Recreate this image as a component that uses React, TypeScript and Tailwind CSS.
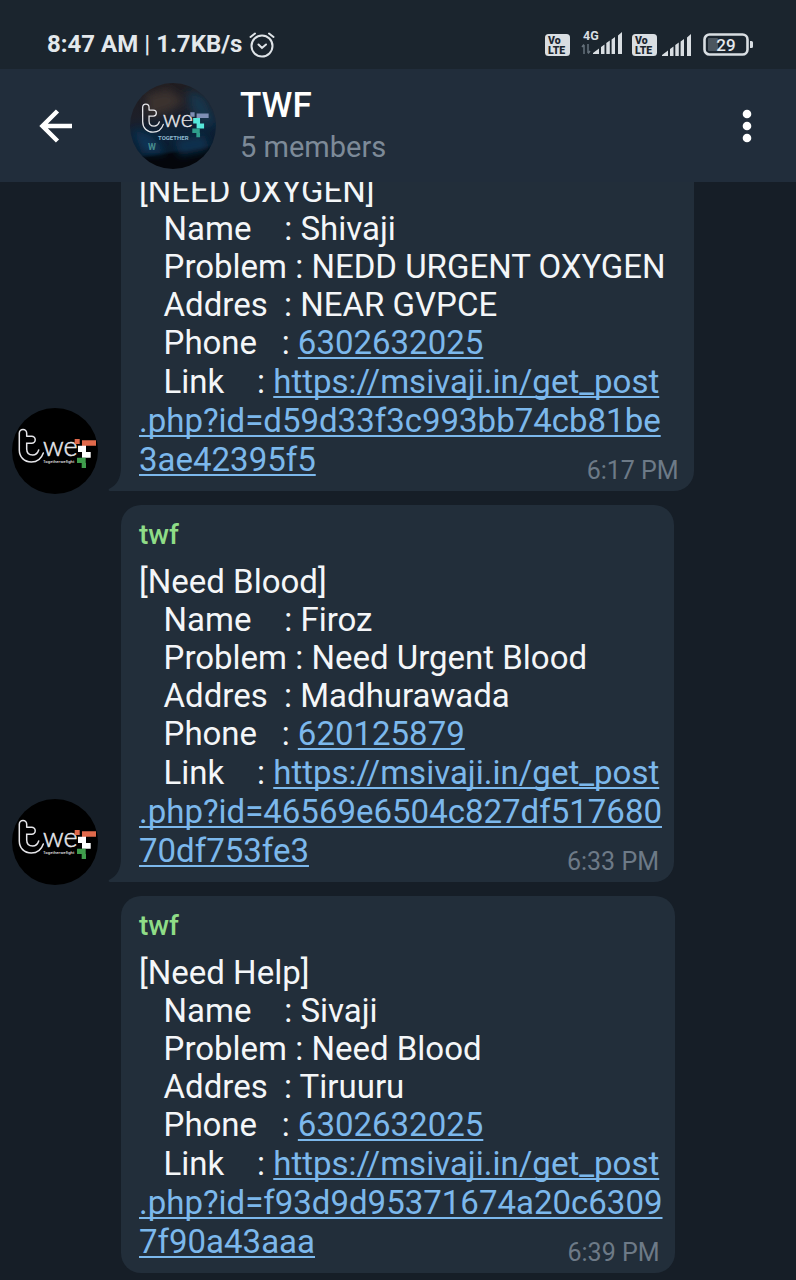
import React, { Fragment } from "react";

type Message = {
  sender?: string;
  title: string;
  name: string;
  problem: string;
  address: string;
  phone: string;
  link: string[];
  time: string;
  avatar: boolean;
  wide?: boolean;
};

const messages: Message[] = [
  {
    title: "[NEED OXYGEN]",
    name: "Shivaji",
    problem: "NEDD URGENT OXYGEN",
    address: "NEAR GVPCE",
    phone: "6302632025",
    link: ["https://msivaji.in/get_post", ".php?id=d59d33f3c993bb74cb81be", "3ae42395f5"],
    time: "6:17 PM",
    avatar: true,
    wide: true,
  },
  {
    sender: "twf",
    title: "[Need Blood]",
    name: "Firoz",
    problem: "Need Urgent Blood",
    address: "Madhurawada",
    phone: "620125879",
    link: ["https://msivaji.in/get_post", ".php?id=46569e6504c827df517680", "70df753fe3"],
    time: "6:33 PM",
    avatar: true,
  },
  {
    sender: "twf",
    title: "[Need Help]",
    name: "Sivaji",
    problem: "Need Blood",
    address: "Tiruuru",
    phone: "6302632025",
    link: ["https://msivaji.in/get_post", ".php?id=f93d9d95371674a20c6309", "7f90a43aaa"],
    time: "6:39 PM",
    avatar: false,
  },
];

function LogoMark({ top, middle, bottom }: { top: string; middle: string; bottom: string }) {
  return (
    <>
      <path
        d="M14.7 28.3V25.2a3.7 3.7 0 0 0-7.4 0V42c0 7 5 12 12 12 6 0 10-3 12-9M14.7 28.3h5a3.3 3.3 0 0 1 0 7h-5V41c0 4 2.5 6 6 6 3.500 0 5-2 6-5"
        fill="none"
        stroke="#e6e6ea"
        strokeWidth="1.5"
        strokeLinecap="round"
      />
      <text x="31" y="48" fill="#e6e6ea" stroke="#e6e6ea" strokeWidth="0.5" fontFamily="Lato" fontWeight="300" fontSize="27">
        we
      </text>
      <path d="M62.7 31h5v5h-5zM70 32.3h14v5.400H74v.8h-4z" fill={top} />
      <path d="M66 37.7h8V44h4.7v5.7H70V44h-4z" fill={middle} />
      <path d="M65 49.7h8.7V55H74v5h-4.300v-5H65z" fill={bottom} />
    </>
  );
}

function SenderAvatar() {
  return (
    <svg viewBox="0 0 86 86" className="size-[86px]" role="img" aria-label="twf">
      <circle cx="43" cy="43" r="43" fill="#000" />
      <LogoMark top="#e0694b" middle="#fff" bottom="#3f9d4c" />
      <text x="31" y="54.5" fill="#ddd" fontFamily="Roboto" fontWeight="500" fontSize="4.3">
        Togetherwefight
      </text>
    </svg>
  );
}

function GroupAvatar() {
  return (
    <svg viewBox="0 0 86 86" className="size-[86px] shrink-0" role="img" aria-label="TWF group">
      <defs>
        <linearGradient id="sky" x1="0" y1="0" x2="0.15" y2="1">
          <stop offset="0" stopColor="#211c1e" />
          <stop offset="0.4" stopColor="#1d1f29" />
          <stop offset="0.62" stopColor="#0d2238" />
          <stop offset="0.84" stopColor="#0a1a2c" />
          <stop offset="0.88" stopColor="#04060b" />
        </linearGradient>
        <filter id="soft">
          <feGaussianBlur stdDeviation="4" />
        </filter>
        <clipPath id="disc">
          <circle cx="43" cy="43" r="43" />
        </clipPath>
      </defs>
      <g clipPath="url(#disc)">
        <rect width="86" height="86" fill="url(#sky)" />
        <g filter="url(#soft)">
          <path d="M58 6l18 8 10 24-12 6-14-18z" fill="#14344b" />
          <path d="M16 12l22-6 16 12-14 10-22 6z" fill="#3a302f" />
          <path d="M4 46l18 8 14 16H12z" fill="#103556" />
          <path d="M44 58l30-6 6 14-30 6z" fill="#113150" />
        </g>
        <g transform="translate(6.4 2.7) scale(.86)">
          <LogoMark top="#7f8fb4" middle="#56e8db" bottom="#2f9d8b" />
        </g>
        <text x="28" y="56.500" fill="#8fb9cf" fontFamily="Roboto" fontWeight="700" fontSize="6">
          TOGETHER
        </text>
        <text x="18" y="67" fill="#478b8c" fontFamily="Roboto" fontWeight="700" fontSize="9">
          W
        </text>
      </g>
    </svg>
  );
}

function AlarmIcon() {
  return (
    <svg viewBox="0 0 26 26" className="ml-[7px] size-[26px]" fill="none" stroke="#dfe4e8" strokeWidth="2" strokeLinecap="round" aria-hidden="true">
      <circle cx="13" cy="14" r="10.5" />
      <path d="M9.5 12.5l3.5 3.500 4-3.500M1.500 5l4.500-3.500M24.500 5L20 1.500" />
    </svg>
  );
}

function VolteIcon() {
  return (
    <svg viewBox="0 0 25 22" className="h-[22px] w-[25px]" aria-hidden="true">
      <rect width="25" height="22" rx="3.500" fill="#d9dee2" />
      <text x="3" y="10" fill="#1b252e" fontFamily="Roboto" fontWeight="900" fontSize="10.500">
        Vo
      </text>
      <text x="3" y="19.500" fill="#1b252e" fontFamily="Roboto" fontWeight="900" fontSize="10.500">
        LTE
      </text>
    </svg>
  );
}

function SignalBars() {
  return <path d="M0 22v-1l6-4.500V22zM8 22v-7l3.500-2.500V22zM13.300 22V11l3.500-2.500V22zM18.600 22V7.500L22 5v17zM25 22V3.500L29 0v22z" fill="#d9dee2" />;
}

function StatusBar() {
  return (
    <div className="flex h-[69px] items-center justify-between bg-[#1b252e] pt-[20px] pr-[42px] pl-[47px]">
      <div className="flex items-center text-[24px] leading-[49px] font-bold text-[#e3e8ec]">
        8:47 AM<span className="mx-[6px] font-medium">|</span>1.7KB/s
        <AlarmIcon />
      </div>
      <div className="flex items-center">
        <VolteIcon />
        <svg viewBox="0 0 42 28" className="mb-[6px] ml-[11px] h-[28px] w-[42px]" aria-hidden="true">
          <text x="2" y="12" fill="#d9dee2" fontFamily="Roboto" fontWeight="700" fontSize="12.500">
            4G
          </text>
          <path d="M3 17v9M1 19l2-2.500M7 16v9M9 23l-2 2.500" stroke="#66727c" strokeWidth="1.500" fill="none" />
          <g transform="translate(12 4)">
            <SignalBars />
          </g>
        </svg>
        <span className="ml-[9px] flex items-center gap-[5px]">
          <VolteIcon />
          <svg viewBox="0 0 30 22" className="h-[22px] w-[30px]" aria-hidden="true">
            <SignalBars />
          </svg>
        </span>
        <svg viewBox="0 0 51 23" className="ml-[11px] h-[23px] w-[51px]" aria-hidden="true">
          <rect x="1.500" y="1.500" width="43" height="20" rx="5" fill="none" stroke="#d9dee2" strokeWidth="2.600" />
          <rect x="5" y="5" width="10" height="13" rx="1" fill="#4c565f" />
          <path d="M47 8h1.500a1.500 1.500 0 0 1 1.500 1.500v4a1.500 1.500 0 0 1-1.500 1.500H47z" fill="#d9dee2" />
          <text x="23" y="17.500" textAnchor="middle" fill="#e3e8ec" fontFamily="Roboto" fontWeight="500" fontSize="17">
            29
          </text>
        </svg>
      </div>
    </div>
  );
}

function ChatHeader() {
  return (
    <header className="flex h-[113px] items-center bg-[#212d3b] pr-[32px] pl-[36px]">
      <button type="button" aria-label="Back" className="flex size-[40px] items-center justify-center">
        <svg viewBox="0 0 40 40" className="size-[40px]" fill="none" stroke="#fff" strokeWidth="4.500" aria-hidden="true">
          <path d="M36 20H7M21.500 5L6.500 20l15 15" />
        </svg>
      </button>
      <div className="ml-[54px] flex flex-1 items-center">
        <GroupAvatar />
        <div className="ml-[24px]">
          <h1 className="text-[35px] leading-[42px] font-medium text-white">TWF</h1>
          <p className="text-[29px] leading-[40px] text-[#7d8a98]">5 members</p>
        </div>
      </div>
      <button type="button" aria-label="More options" className="flex h-[40px] w-[34px] items-center justify-center">
        <svg viewBox="0 0 10 34" className="h-[34px] w-[10px]" fill="#fff" aria-hidden="true">
          <circle cx="5" cy="5" r="4.300" />
          <circle cx="5" cy="17" r="4.300" />
          <circle cx="5" cy="29" r="4.300" />
        </svg>
      </button>
    </header>
  );
}

function Bubble({ message }: { message: Message }) {
  const link = "text-[#7cb8ec] underline decoration-2 underline-offset-[3px] [text-decoration-skip-ink:none]";
  return (
    <li className="flex items-end pl-[12px]">
      <div className="-mb-[3px] w-[86px] shrink-0">{message.avatar && <SenderAvatar />}</div>
      <article
        className={`relative ml-[23px] rounded-[20px] bg-[#222e3a] pb-[12px] pl-[18px] ${
          message.wide ? "rounded-t-none pr-[28px]" : "pr-[12px]"
        } ${message.avatar ? "rounded-bl-none" : ""}`}
      >
        {message.sender && (
          <h2 className="pt-[12px] pb-[10px] text-[28px] leading-[36px] font-medium text-[#8fdc87]">{message.sender}</h2>
        )}
        <div className="text-[33px] leading-[38px] whitespace-pre text-[#f4f6f8]">
          <p>{message.title}</p>
          <p>{`   Name    : ${message.name}`}</p>
          <p>{`   Problem : ${message.problem}`}</p>
          <p>{`   Addres  : ${message.address}`}</p>
          <p>
            {"   Phone   : "}
            <a href={`tel:${message.phone}`} className={link}>
              {message.phone}
            </a>
          </p>
          <p className="leading-[39px]">
            {"   Link    : "}
            <a href={message.link.join("")} className={link}>
              {message.link.map((part, index) => (
                <Fragment key={part}>
                  {index > 0 && <br />}
                  {part}
                </Fragment>
              ))}
            </a>
          </p>
        </div>
        <time className="absolute right-[15px] bottom-[5px] text-[25px] leading-[30px] text-[#6d7a87]">{message.time}</time>
        {message.avatar && (
          <svg viewBox="0 0 14 24" className="absolute bottom-0 -left-[13px] h-[24px] w-[14px]" fill="#222e3a" aria-hidden="true">
            <path d="M14 0h-1C13 11 9 18 1 22c-1 1 0 2 1 2h12z" />
          </svg>
        )}
      </article>
    </li>
  );
}

export default function App() {
  return (
    <div className="min-h-screen bg-[#161e27] font-['Roboto',sans-serif]">
      <StatusBar />
      <ChatHeader />
      <main className="overflow-hidden">
        <ul className="-mt-[10px] flex flex-col gap-[14px] pb-[7px]">
          {messages.map((message) => (
            <Bubble key={message.time} message={message} />
          ))}
        </ul>
      </main>
    </div>
  );
}
